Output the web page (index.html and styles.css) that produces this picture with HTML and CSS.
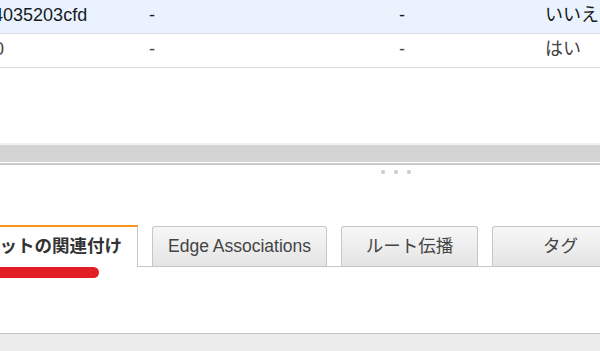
FILE: index.html
```html
<!DOCTYPE html>
<html lang="ja">
<head>
  <meta charset="UTF-8">
  <title>ルートテーブル</title>
  <link rel="stylesheet" href="styles.css">
</head>
<body>
  <div class="page">
    <!-- Route table list -->
    <div class="table-panel">
      <div class="row selected">
        <div class="cell"></div>
        <div class="cell">rtb-0e8c9f14035203cfd</div>
        <div class="cell">-</div>
        <div class="cell">-</div>
        <div class="cell">いいえ</div>
      </div>
      <div class="row">
        <div class="cell"></div>
        <div class="cell">rtb-5a7e9bf0</div>
        <div class="cell">-</div>
        <div class="cell">-</div>
        <div class="cell">はい</div>
      </div>
    </div>

    <!-- Splitter -->
    <div class="splitter"></div>

    <!-- Details -->
    <div class="detail-panel">
      <div class="grip"><span></span><span></span><span></span></div>
      <div class="tabs">
        <div class="tab active">サブネットの関連付け</div>
        <div class="tab">Edge Associations</div>
        <div class="tab">ルート伝播</div>
        <div class="tab">タグ</div>
      </div>
      <div class="tab-body">
        <div class="mark"></div>
      </div>
      <div class="footer"></div>
    </div>
  </div>
</body>
</html>
```

FILE: styles.css
```css
:root {
  --color-text: #16191f;
  --color-muted: #444;
  --color-line: #dcdcdc;
  --color-row-sel: #eaf3fd;
  --color-tab-border: #c6c6c6;
  --color-orange: #f7981c;
  --color-mark: #e31d24;
}
* { box-sizing: border-box; margin: 0; padding: 0; }
body {
  font-family: "Liberation Sans", "Noto Sans CJK JP", sans-serif;
  font-size: 17.5px;
  color: var(--color-text);
  background: #fff;
  overflow: hidden;
}
.page { width: 1191px; margin-left: -200px; }

/* table */
.table-panel { height: 143px; font-size: 18px; }
.row {
  display: grid;
  grid-template-columns: 94px 247px 250px 146px 1fr;
  height: 34px;
  border-bottom: 1px solid var(--color-line);
  color: var(--color-muted);
}
.row.selected { background: var(--color-row-sel); color: var(--color-text); }
.cell { padding-left: 8px; line-height: 31px; white-space: nowrap; }

/* splitter */
.splitter {
  height: 19px;
  border-top: 2px solid #f2f2f2;
  background: #d4d4d4;
}
.detail-panel {
  margin-top: 1px;
  border-top: 2px solid #cbcbcb;
}
.grip {
  display: flex; justify-content: center; gap: 9px;
  padding-top: 5px; height: 60px;
}
.grip span {
  width: 4px; height: 4px;
  border-radius: 2px 2px 1px 1px;
  background: linear-gradient(#c4c4c4, #d6d6d6);
}

/* tabs */
.tabs {
  display: flex; align-items: flex-end;
  height: 42px;
  padding-left: 131px;
  border-bottom: 1px solid var(--color-tab-border);
}
.tab {
  min-width: 137px; height: 40px;
  padding: 0 15px; margin-right: 14px;
  border: 1px solid var(--color-tab-border); border-bottom: none;
  border-radius: 3px 3px 0 0;
  background: linear-gradient(#f7f7f7, #e4e4e4);
  color: var(--color-muted);
  line-height: 39px; text-align: center; white-space: nowrap;
}
.tab.active {
  height: 42px; margin-bottom: -1px;
  border-top: 2px solid var(--color-orange);
  border-radius: 0;
  background: #fff;
  color: #333; font-weight: bold;
}

.tab-body { position: relative; height: 66px; }
/* red highlight stroke drawn over the screenshot */
.mark {
  position: absolute; top: 0; left: 170px;
  width: 129px; height: 11px;
  border-radius: 6px;
  background: var(--color-mark);
}
.footer {
  height: 30px;
  border-top: 1px solid #c4c4c4;
  background: #ececec;
}
```
